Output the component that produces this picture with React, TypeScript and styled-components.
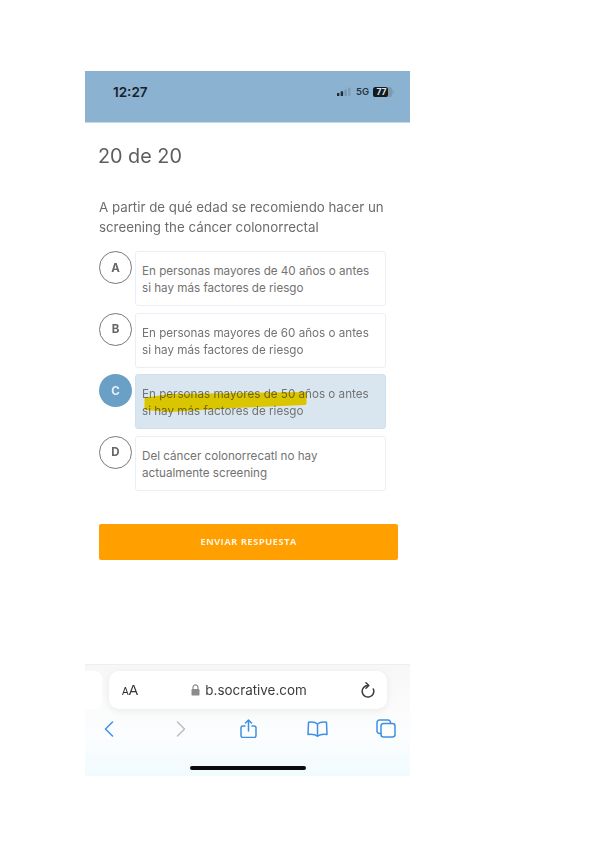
import React from 'react'
import styled, { createGlobalStyle } from 'styled-components'

// ================================================================================================

const GlobalStyle = createGlobalStyle`
  html, body {
    margin: 0;
    padding: 0;
    background: #fff;
  }
`

const Page = styled.div`
  width: 599px;
  height: 848px;
  padding: 71px 0 0 85px;
  box-sizing: border-box;
  overflow: hidden;
  background: #fff;
  font-family: Inter, "Liberation Sans", sans-serif;
`

const Phone = styled.div`
  width: 325px;
  height: 705px;
  display: flex;
  flex-direction: column;
  filter: blur(0.55px);
`

const StatusBar = styled.div`
  height: 52px;
  flex: none;
  box-sizing: border-box;
  padding: 0 16px 10px 28px;
  display: flex;
  align-items: center;
  justify-content: space-between;
  background: #8cb2d1;
  border-bottom: 1px solid #c5d8e6;
`

const Clock = styled.span`
  font-size: 13.5px;
  font-weight: 600;
  color: #16212b;
`

const StatusIcons = styled.div`
  display: flex;
  align-items: center;
  gap: 4px;
`

const Network = styled.span`
  font-size: 9.5px;
  font-weight: 600;
  color: #28343e;
`

const Content = styled.main`
  padding: 21px 13px 0 13px;
  display: flex;
  flex-direction: column;
`

const Title = styled.h1`
  margin: 0;
  font-size: 19.8px;
  line-height: 25px;
  font-weight: 400;
  color: #5d5d5d;
`

const Question = styled.p`
  margin: 28px 0 0 1px;
  font-size: 13.3px;
  line-height: 20px;
  color: #6c6c6c;
`

const Options = styled.div`
  margin: 14px 0 0 1px;
  display: flex;
  flex-direction: column;
  gap: 6.67px;
`

const Option = styled.div`
  display: flex;
  gap: 3px;
`

const Letter = styled.div<{ $selected?: boolean }>`
  width: 33px;
  height: 33px;
  flex: none;
  box-sizing: border-box;
  border-radius: 50%;
  display: flex;
  align-items: center;
  justify-content: center;
  font-size: 11.5px;
  font-weight: 700;
  color: ${props => (props.$selected ? '#e8f0f6' : '#666')};
  background: ${props => (props.$selected ? '#6a9fc6' : '#fff')};
  border: ${props => (props.$selected ? 'none' : '1.3px solid #777')};
`

const Card = styled.div<{ $selected?: boolean }>`
  position: relative;
  width: 251px;
  height: 55px;
  box-sizing: border-box;
  padding: 11px 6px 0 6px;
  border-radius: 3px;
  font-size: 11.65px;
  line-height: 17px;
  color: #737373;
  background: ${props => (props.$selected ? '#d9e6f0' : '#fff')};
  border: 1px solid ${props => (props.$selected ? '#d0e0ec' : '#e9eff5')};
`

const Highlight = styled.svg`
  position: absolute;
  left: 0;
  top: 0;
  width: 251px;
  height: 55px;
  mix-blend-mode: multiply;
  pointer-events: none;
`

const SubmitButton = styled.button`
  margin: 33px 0 0 1px;
  width: 299px;
  height: 36px;
  flex: none;
  border: none;
  border-radius: 2px;
  background: #ffa000;
  color: #fdf3e0;
  font-family: "Open Sans", sans-serif;
  font-size: 9.5px;
  font-weight: 700;
  letter-spacing: 0.4px;
`

const BrowserBar = styled.div`
  margin-top: auto;
  height: 112px;
  flex: none;
  box-sizing: border-box;
  padding-top: 6px;
  display: flex;
  flex-direction: column;
  background: linear-gradient(#f7f7f7 0%, #fbfbfb 35%, #fbfdfe 65%, #f1fbfe 100%);
  border-top: 1px solid #eeeeee;
`

const TabRow = styled.div`
  display: flex;
  gap: 7px;
`

const PrevTab = styled.div`
  width: 17px;
  height: 38px;
  flex: none;
  background: #fff;
  border-radius: 0 8px 8px 0;
`

const UrlPill = styled.div`
  width: 278px;
  height: 38px;
  flex: none;
  box-sizing: border-box;
  padding: 0 11px 0 13px;
  display: flex;
  align-items: center;
  justify-content: space-between;
  background: #fff;
  border-radius: 10px;
  box-shadow: 0 2px 8px rgba(0, 0, 0, 0.07);
`

const TextSize = styled.span`
  font-family: "Liberation Sans", sans-serif;
  font-size: 14px;
  color: #333;

  small {
    font-size: 10px;
  }
`

const Address = styled.span`
  display: flex;
  align-items: center;
  gap: 5px;
  font-size: 13.4px;
  color: #3c3c3c;
`

const Toolbar = styled.div`
  margin-top: 10px;
  padding-left: 12px;
  display: grid;
  grid-template-columns: 72px 67px 69px 69px 24px;
  align-items: center;
`

const ToolSlot = styled.div`
  width: 24px;
  display: flex;
  justify-content: center;
`

const ToolIcon = styled.svg<{ $color?: string }>`
  display: block;
  flex: none;
  fill: none;
  stroke: ${props => props.$color || '#3f90e4'};
  stroke-width: 1.5;
  stroke-linecap: round;
  stroke-linejoin: round;
`

const HomeIndicator = styled.div`
  align-self: center;
  margin-top: auto;
  margin-bottom: 6px;
  width: 116px;
  height: 4px;
  border-radius: 2px;
  background: #0c0c0c;
`

// ================================================================================================

const options = [
  { letter: 'A', text: 'En personas mayores de 40 años o antes si hay más factores de riesgo' },
  { letter: 'B', text: 'En personas mayores de 60 años o antes si hay más factores de riesgo' },
  { letter: 'C', text: 'En personas mayores de 50 años o antes si hay más factores de riesgo', selected: true },
  { letter: 'D', text: 'Del cáncer colonorrecatl no hay actualmente screening' },
]

// ================================================================================================

const SignalIcon = () => (
  <svg width="15" height="9" viewBox="0 0 15 9">
    <rect x="0" y="6" width="2.4" height="3" rx="0.5" fill="#1d2a35" />
    <rect x="3.7" y="4.3" width="2.4" height="4.7" rx="0.5" fill="#1d2a35" />
    <rect x="7.4" y="2.4" width="2.4" height="6.6" rx="0.5" fill="#7896ad" />
    <rect x="11.1" y="0.4" width="2.4" height="8.6" rx="0.5" fill="#7e9db5" />
  </svg>
)

const BatteryIcon = () => (
  <svg width="21" height="10" viewBox="0 0 21 10">
    <rect x="0" y="0" width="19" height="10" rx="2.6" fill="#7d9ab1" />
    <rect x="0" y="0" width="15" height="10" rx="2.6" fill="#141b20" />
    <rect x="19.5" y="3.2" width="1.3" height="3.6" rx="0.6" fill="#7d9ab1" />
    <text x="8.5" y="8" textAnchor="middle" fontSize="8.5" fontWeight="700" fill="#dfe6ec" fontFamily="Inter, sans-serif">
      77
    </text>
  </svg>
)

const LockIcon = () => (
  <svg width="9" height="12" viewBox="0 0 9 12">
    <path d="M2 5.5V3.4a2.5 2.5 0 0 1 5 0v2.1" fill="none" stroke="#8c8c8c" strokeWidth="1.2" />
    <rect x="0.5" y="5" width="8" height="6.6" rx="1.2" fill="#8c8c8c" />
  </svg>
)

// ================================================================================================

const App = () => (
  <Page>
    <GlobalStyle />
    <Phone>
      <StatusBar>
        <Clock>12:27</Clock>
        <StatusIcons>
          <SignalIcon />
          <Network>5G</Network>
          <BatteryIcon />
        </StatusIcons>
      </StatusBar>

      <Content>
        <Title>20 de 20</Title>
        <Question>A partir de qué edad se recomiendo hacer un screening the cáncer colonorrectal</Question>

        <Options>
          {options.map(option => (
            <Option key={option.letter}>
              <Letter $selected={option.selected}>{option.letter}</Letter>
              <Card $selected={option.selected}>
                {option.text}
                {option.selected && (
                  <Highlight viewBox="0 0 251 55">
                    <path
                      d="M10 24 L34 20.500 L169 18.500 L169 28.500 L99 31.500 L34 35.500 L10 33.500 Z"
                      fill="#ffdc00"
                      stroke="#ffdc00"
                      strokeWidth="3"
                      strokeLinejoin="round"
                    />
                  </Highlight>
                )}
              </Card>
            </Option>
          ))}
        </Options>

        <SubmitButton>ENVIAR RESPUESTA</SubmitButton>
      </Content>

      <BrowserBar>
        <TabRow>
          <PrevTab />
          <UrlPill>
            <TextSize>
              <small>A</small>A
            </TextSize>
            <Address>
              <LockIcon />
              b.socrative.com
            </Address>
            <ToolIcon $color="#3a3a3a" width="16" height="16" viewBox="0 0 16 16">
              <path d="M8 3.500A5.800 5.800 0 1 0 13.300 7" />
              <path d="M6 0.800L8.800 3.500 6 6.200" />
            </ToolIcon>
          </UrlPill>
        </TabRow>

        <Toolbar>
          <ToolSlot>
            <ToolIcon width="10" height="16" viewBox="0 0 10 16">
              <path d="M8.500 1L1.500 8 8.500 15" />
            </ToolIcon>
          </ToolSlot>
          <ToolSlot>
            <ToolIcon $color="#bdbdbd" width="10" height="16" viewBox="0 0 10 16">
              <path d="M1.500 1L8.500 8 1.500 15" />
            </ToolIcon>
          </ToolSlot>
          <ToolSlot>
            <ToolIcon width="17" height="19" viewBox="0 0 17 19">
              <path d="M5 7H3a2 2 0 0 0-2 2v7.500a2 2 0 0 0 2 2h11a2 2 0 0 0 2-2V9a2 2 0 0 0-2-2h-2" />
              <path d="M8.500 12V1M5.500 4L8.500 1l3 3" />
            </ToolIcon>
          </ToolSlot>
          <ToolSlot>
            <ToolIcon width="21" height="16" viewBox="0 0 21 16">
              <path d="M10.500 3C8.500 1.200 5 0.700 1.500 1.200L1 13.500c3.500-.4 7.500 0 9.500 1.800 2-1.800 6-2.200 9.500-1.800L19.500 1.200C16 0.700 12.500 1.200 10.500 3zM10.500 3V15.300" />
            </ToolIcon>
          </ToolSlot>
          <ToolSlot>
            <ToolIcon width="20" height="19" viewBox="0 0 20 19">
              <rect x="5" y="4.500" width="14" height="13.500" rx="2.500" />
              <path d="M5 14.500H3.500A2.500 2.500 0 0 1 1 12V3.500A2.500 2.500 0 0 1 3.500 1H12a2.500 2.500 0 0 1 2.500 2.500v1" />
            </ToolIcon>
          </ToolSlot>
        </Toolbar>

        <HomeIndicator />
      </BrowserBar>
    </Phone>
  </Page>
)

// ================================================================================================

export default App
